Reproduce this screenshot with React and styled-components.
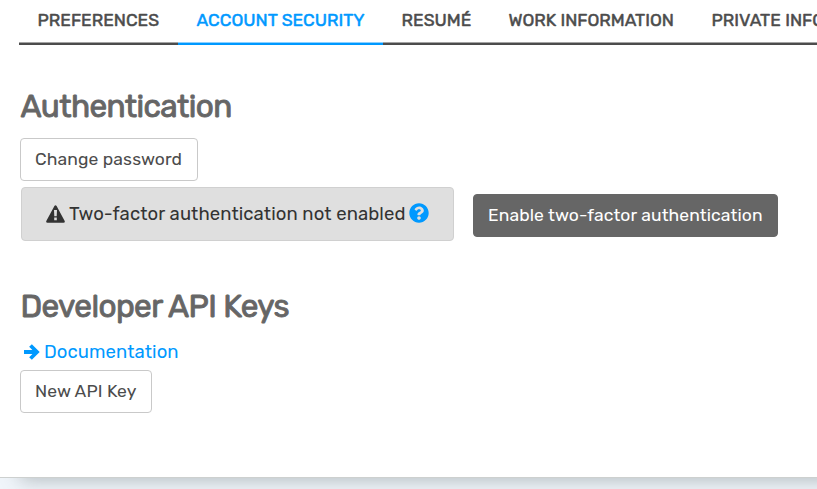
import React from 'react';
import styled, { createGlobalStyle } from 'styled-components';
import { FaQuestionCircle } from 'react-icons/fa';

const GlobalStyle = createGlobalStyle`
  * { box-sizing: border-box; }
  body { margin: 0; background: #f0f5fa; overflow: hidden; font-family: Rubik, Roboto, sans-serif; font-weight: 400; }
`;

const Page = styled.div`
  height: 489px;
  width: 817px;
  overflow: hidden;
`;

const Panel = styled.main`
  height: 478px;
  padding-left: 19px;
  background: #fff;
  border-bottom: 1px solid #cdd0cf;
  box-shadow: 20px 2px 18px 0 rgba(60, 72, 76, 0.34);
`;

const Tabs = styled.nav`
  display: flex;
  width: 960px;
  height: 45px;
`;

const Tab = styled.a`
  flex: 0 0 ${(p) => p.$width}px;
  height: 45px;
  padding: 9px 0 0 18.6px;
  border-bottom: 2px solid ${(p) => (p.$active ? '#0099ff' : '#4c4c4c')};
  box-shadow: inset 0 -1px ${(p) => (p.$active ? '#8dd0ff' : '#a4a4a4')};
  color: ${(p) => (p.$active ? '#0099ff' : '#4c4c4c')};
  font-size: 17.5px;
  font-weight: 400;
  -webkit-text-stroke: 0.5px currentColor;
  line-height: 23px;
  white-space: nowrap;
`;

const Heading = styled.h2`
  margin: ${(p) => p.$top}px 0 0 1.5px;
  height: 40px;
  font-size: 31.5px;
  font-weight: 400;
  -webkit-text-stroke: 0.9px currentColor;
  line-height: 40px;
  color: #666;
  letter-spacing: -0.6px;
`;

const Button = styled.button`
  display: block;
  width: ${(p) => p.$width}px;
  height: 43px;
  padding: 0 0 1px 14px;
  border: 1px solid ${(p) => (p.$dark ? '#666' : '#c9c9c9')};
  border-radius: 4px;
  background: ${(p) => (p.$dark ? '#666' : '#fff')};
  color: ${(p) => (p.$dark ? '#fff' : '#4c4c4c')};
  font: 400 17.5px/24px Rubik, Roboto, sans-serif;
  letter-spacing: 0.1px;
  text-align: left;
  white-space: nowrap;
`;

const ButtonRow = styled.div`
  margin: ${(p) => p.$top}px 0 0 1px;
`;

const AuthRow = styled.div`
  display: flex;
  align-items: center;
  gap: 19px;
  margin: 6px 0 0 2px;
`;

const ActionSlot = styled.div`
  padding-top: 2px;
`;

const Notice = styled.div`
  display: flex;
  align-items: center;
  width: 433px;
  height: 54px;
  padding: 0 0 1px 24px;
  border: 1px solid #d0d0d0;
  border-radius: 4px;
  background: #dfdfdf;
  color: #333;
  font-size: 18.5px;
  letter-spacing: 0.09px;
  white-space: nowrap;
`;

const NoticeText = styled.span`
  width: 344px;
  padding-left: 4px;
`;

const HelpIcon = styled(FaQuestionCircle)`
  margin-bottom: 1px;
  color: #0099ff;
`;

const DocLink = styled.a`
  display: flex;
  align-items: center;
  height: 24px;
  margin: 13px 0 0 4px;
  color: #0099ff;
  font-size: 18.5px;
  line-height: 24px;
  letter-spacing: 0.09px;
`;

const LinkText = styled.span`
  margin-left: 4px;
`;

const tabs = [
  { label: 'PREFERENCES', width: 159 },
  { label: 'ACCOUNT SECURITY', width: 205, active: true },
  { label: 'RESUMÉ', width: 107 },
  { label: 'WORK INFORMATION', width: 203 },
  { label: 'PRIVATE INFORMATION', width: 230 },
];

export default function App() {
  return (
    <>
      <GlobalStyle />
      <Page>
        <Panel>
          <Tabs>
            {tabs.map((t) => (
              <Tab key={t.label} $width={t.width} $active={t.active}>
                <span>{t.label}</span>
              </Tab>
            ))}
          </Tabs>
          <Heading $top={42}><span>Authentication</span></Heading>
          <ButtonRow $top={11}>
            <Button $width={178}>Change password</Button>
          </ButtonRow>
          <AuthRow>
            <Notice>
              <svg width="19" height="18" viewBox="0 0 19 18">
                <path
                  fillRule="evenodd"
                  fill="currentColor"
                  d="M8.4 1Q9.5 -0.4 10.6 1L18.7 16Q19.2 17.6 17.5 17.8H1.5Q-0.2 17.6 .3 16ZM8 5L8.3 11.2H10.7L11 5ZM8.2 12.6V15.2H10.8V12.6Z"
                />
              </svg>
              <NoticeText>Two-factor authentication not enabled</NoticeText>
              <HelpIcon size={20} />
            </Notice>
            <ActionSlot>
              <Button $dark $width={305}>Enable two-factor authentication</Button>
            </ActionSlot>
          </AuthRow>
          <Heading $top={46}><span>Developer API Keys</span></Heading>
          <DocLink>
            <svg width="17" height="18" viewBox="0 0 17 18">
              <path d="M1 9H14M7.5 2.5L14 9L7.5 15.5" fill="none" stroke="currentColor" strokeWidth="3.8" />
            </svg>
            <LinkText>Documentation</LinkText>
          </DocLink>
          <ButtonRow $top={6}>
            <Button $width={132}>New API Key</Button>
          </ButtonRow>
        </Panel>
      </Page>
    </>
  );
}
